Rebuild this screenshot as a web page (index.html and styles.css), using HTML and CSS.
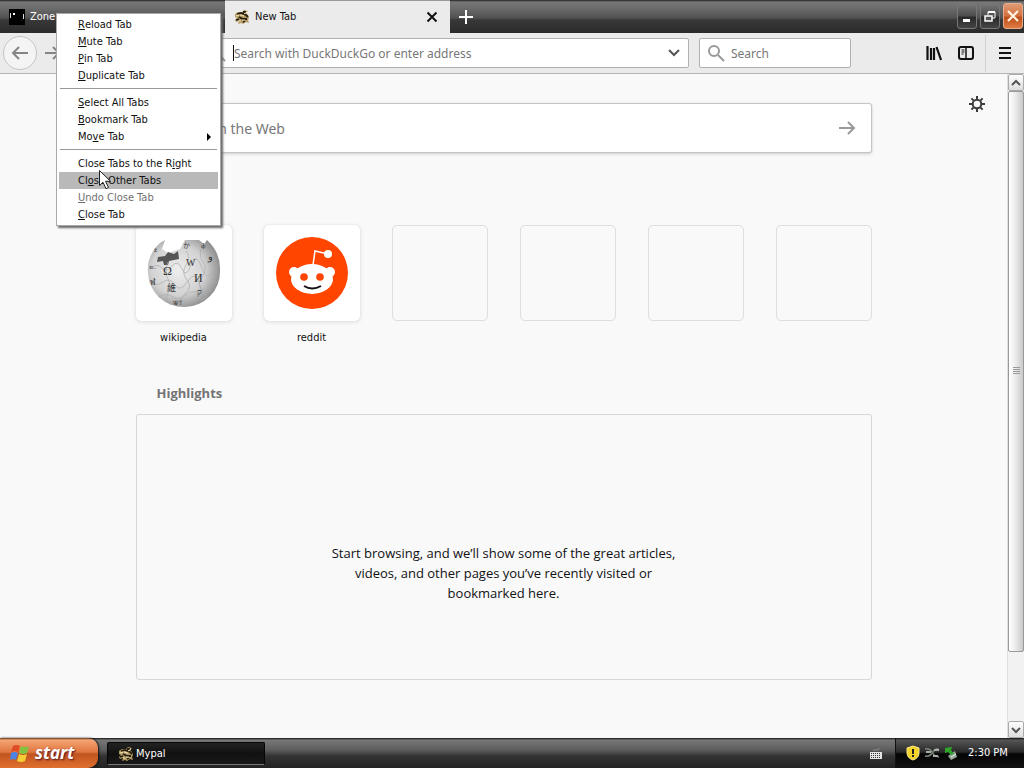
FILE: index.html
```html
<!DOCTYPE html>
<html lang="en">
<head>
<meta charset="utf-8">
<meta name="viewport" content="width=device-width, initial-scale=1">
<title>New Tab</title>
<link rel="stylesheet" href="styles.css">
</head>
<body>
<svg class="defs" aria-hidden="true">
  <symbol id="bee" viewBox="0 0 16 16">
    <path d="M1 5l3-2 4 0 2-2 4 1-2 2 2 2 1 3-1 2 1 3-3-1-3 2-2-1-3 1 1-3-3 1-1-2 2-2-2-1z" fill="#b39a62"/>
    <path d="M3 5l4-1 5 2 2 2M5 8l4 2 4 0M9 3l3 0M2 11l3-1M9 13l2-1" stroke="#241d10" stroke-width="1.8" fill="none"/>
    <path d="M2 7l3-1M6 6l4 1M8 11l3 0M10 5l3-2M5 12l2 0" stroke="#f0e3b4" stroke-width="1"/>
  </symbol>
</svg>

<header class="titlebar">
  <div class="tab tab-back">
    <svg class="icon16" viewBox="0 0 16 16" aria-hidden="true"><path d="M0 0h16v16H0z" fill="#000"/><path d="M1.500 4v5M14.500 5v5" stroke="#ddd"/><path d="M4 4h2v2H4z" fill="#fff"/></svg>
    <span class="tab-title">Zone</span>
  </div>
  <div class="tab tab-active">
    <svg class="icon16" aria-hidden="true"><use href="#bee"/></svg>
    <span class="tab-title">New Tab</span>
    <button class="plain" aria-label="Close tab"><svg width="12" height="12" viewBox="0 0 12 12"><path d="M1.500 1.500l9 9M10.500 1.500l-9 9" stroke="#111" stroke-width="2"/></svg></button>
  </div>
  <button class="plain new-tab" aria-label="Open a new tab"><svg width="16" height="16" viewBox="0 0 16 16"><path d="M8 1v14M1 8h14" stroke="#fff" stroke-width="2"/></svg></button>
  <div class="window-buttons">
    <button class="winbtn" aria-label="Minimize"><svg width="18" height="24" viewBox="0 0 18 24"><path d="M5 15h7v3H5z" fill="#fff"/></svg></button>
    <button class="winbtn" aria-label="Restore"><svg width="18" height="24" viewBox="0 0 18 24"><path d="M7 11V8h7v6h-3" stroke="#fff" fill="none"/><path d="M7 8h7" stroke="#fff" stroke-width="2"/><path d="M4 12h7v5H4z" stroke="#fff" stroke-width="1.5" fill="#555"/></svg></button>
    <button class="winbtn winbtn-close" aria-label="Close"><svg width="18" height="24" viewBox="0 0 18 24"><path d="M4 7l10 10M14 7L4 17" stroke="#fff3e0" stroke-width="2.2"/></svg></button>
  </div>
</header>

<nav class="toolbar">
  <button class="plain back" aria-label="Back"><svg width="18" height="16" viewBox="0 0 18 16"><path d="M17 8H2M8 2L2 8l6 6" stroke="#858585" stroke-width="2" fill="none"/></svg></button>
  <button class="plain forward" aria-label="Forward"><svg width="16" height="16" viewBox="0 0 16 16"><path d="M0 8h14M8 2l6 6-6 6" stroke="#858585" stroke-width="2" fill="none"/></svg></button>
  <div class="urlbar">
    <svg class="search-icon" width="18" height="18" viewBox="0 0 18 18" aria-hidden="true"><circle cx="7" cy="7" r="5" fill="none" stroke="#999" stroke-width="2"/><path d="M11 11l6 6" stroke="#999" stroke-width="2"/></svg>
    <input type="text" aria-label="Address" placeholder="Search with DuckDuckGo or enter address">
    <button class="plain" aria-label="Show history"><svg width="14" height="10" viewBox="0 0 14 10"><path d="M2 2l5 5 5-5" stroke="#555" stroke-width="2" fill="none"/></svg></button>
  </div>
  <div class="searchbar">
    <svg width="18" height="18" viewBox="0 0 18 18" aria-hidden="true"><circle cx="7" cy="7" r="5" fill="none" stroke="#999" stroke-width="2"/><path d="M11 11l6 6" stroke="#999" stroke-width="2"/></svg>
    <input type="text" aria-label="Search" placeholder="Search">
  </div>
  <div class="tools">
    <button class="plain" aria-label="Library"><svg width="16" height="16" viewBox="0 0 16 16"><path d="M1.500 1v14M5 3v12M8 3v12M10.500 2l4.500 13" stroke="#111" stroke-width="2.200" fill="none"/></svg></button>
    <button class="plain" aria-label="Sidebars"><svg width="16" height="16" viewBox="0 0 16 16"><rect x="1" y="2" width="14" height="12" rx="2" fill="none" stroke="#111" stroke-width="2"/><path d="M8 2v12" stroke="#111" stroke-width="1.500"/><path d="M3.500 5h3M3.500 7h3M3.500 9h2" stroke="#111"/></svg></button>
    <button class="plain menu-button" aria-label="Open menu"><svg width="14" height="14" viewBox="0 0 14 14"><path d="M1 2h12M1 7h12M1 12h12" stroke="#111" stroke-width="2"/></svg></button>
  </div>
</nav>

<div class="viewport">
  <main class="page">
    <button class="plain gear" aria-label="Customize your New Tab page"><svg width="16" height="16" viewBox="0 0 16 16"><circle cx="8" cy="8" r="4.300" fill="none" stroke="#3b3b3b" stroke-width="2"/><path d="M8 0v3M8 13v3M0 8h3M13 8h3M2.400 2.400l2 2M11.600 11.600l2 2M13.600 2.400l-2 2M4.400 11.600l-2 2" stroke="#3b3b3b" stroke-width="2"/></svg></button>
    <div class="column">
      <form class="web-search">
        <input type="text" aria-label="Search the Web" placeholder="Search the Web">
        <button class="plain" type="button" aria-label="Search"><svg width="18" height="16" viewBox="0 0 18 16"><path d="M1 8h15M10 2l6 6-6 6" stroke="#999" stroke-width="2" fill="none"/></svg></button>
      </form>
      <ul class="sites">
        <li><a class="site" href="#wikipedia"><span class="tile">
          <svg width="76" height="76" viewBox="0 0 76 76" aria-hidden="true">
            <defs><radialGradient id="globe" cx="42%" cy="45%" r="62%"><stop offset="0" stop-color="#eee"/><stop offset=".6" stop-color="#d2d2d2"/><stop offset="1" stop-color="#858585"/></radialGradient></defs>
            <path d="M5 20Q10 9 19 5l-3 9 6 4 12-4 5-9 14 0 5 4 3-4q14 13 13 31A36 35 0 0 1 2 38Q1 28 5 20z" fill="url(#globe)"/>
            <path d="M12 22l7-1 3-4 6 2 4-3 1 8-10 2-1 4-4 0-1-4-6 1z" fill="#555"/>
            <path d="M4 33q8-5 12 0t10-2 10 3 9-4 11 3 15-2M3 47q7 5 14 0t12 3 13-4 12 4 15-4M12 62q9-5 15 0t13-2 20 0M22 27q-4 10 0 17t0 14 3 12M40 16q5 6 0 14t1 15-2 14 1 13M56 12q-4 8 1 15t-1 15 1 14-1 9" stroke="#aaa" stroke-width=".7" fill="none"/>
            <g class="glyphs"><text x="17" y="40" font-size="12">Ω</text><text x="40" y="31" font-size="10">W</text><text x="48" y="47" font-size="12">И</text><text x="21" y="56" font-size="9">維</text><text x="51" y="60" font-size="9">ק</text><text x="62" y="25" font-size="10">و</text><text x="3" y="34" font-size="8">உ</text><text x="4" y="50" font-size="8">ฬ</text><text x="37" y="13" font-size="7">か</text><text x="55" y="13" font-size="7">ф</text><text x="27" y="70" font-size="6">ᏔᎢ</text><text x="8" y="17" font-size="7">ž</text></g>
          </svg></span><span class="site-label">wikipedia</span></a></li>
        <li><a class="site" href="#reddit"><span class="tile">
          <svg width="76" height="76" viewBox="0 0 76 76" aria-hidden="true">
            <circle cx="38" cy="38" r="36" fill="#ff4500"/>
            <path d="M39 30l2-14 13 3" stroke="#fff" stroke-width="1.500" fill="none"/>
            <circle cx="54" cy="19" r="4" fill="#fff"/><circle cx="20" cy="37" r="5" fill="#fff"/><circle cx="56" cy="37" r="5" fill="#fff"/>
            <ellipse cx="38" cy="44" rx="21" ry="15" fill="#fff"/>
            <circle cx="30" cy="42" r="3.800" fill="#ff4500"/><circle cx="46" cy="42" r="3.800" fill="#ff4500"/>
            <path d="M30 51q8 5 17 0" stroke="#111" stroke-width="2" fill="none"/>
          </svg></span><span class="site-label">reddit</span></a></li>
        <li><span class="tile tile-empty"></span></li>
        <li><span class="tile tile-empty"></span></li>
        <li><span class="tile tile-empty"></span></li>
        <li><span class="tile tile-empty"></span></li>
      </ul>
      <h2 class="heading">Highlights</h2>
      <section class="highlights"><p>Start browsing, and we’ll show some of the great articles, videos, and other pages you’ve recently visited or bookmarked here.</p></section>
    </div>
  </main>
  <div class="scrollbar">
    <button class="scroll-btn" aria-label="Scroll up"><svg width="10" height="8" viewBox="0 0 10 8"><path d="M1 6l4-4 4 4" stroke="#555" stroke-width="2" fill="none"/></svg></button>
    <div class="track"><div class="thumb"><svg width="7" height="8" viewBox="0 0 7 8" aria-hidden="true"><path d="M0 .5h7M0 2.500h7M0 4.500h7M0 6.500h7" stroke="#999"/></svg></div></div>
    <button class="scroll-btn" aria-label="Scroll down"><svg width="10" height="8" viewBox="0 0 10 8"><path d="M1 2l4 4 4-4" stroke="#555" stroke-width="2" fill="none"/></svg></button>
  </div>
</div>

<footer class="taskbar">
  <button class="start">
    <svg width="20" height="18" viewBox="0 0 20 18" aria-hidden="true"><path d="M3 2q3-2 7 0L8 8Q5 6 1 8z" fill="#df4b24"/><path d="M11 2q4 2 8 0l-2 7q-4 2-8 0z" fill="#83c341"/><path d="M1 9q3-2 7 0l-2 7q-3-2-6 0z" fill="#4d84e2"/><path d="M9 10q4 2 8 0l-2 7q-4 2-8 0z" fill="#f7cd36"/></svg>
    <span>start</span>
  </button>
  <button class="task"><svg class="icon16" aria-hidden="true"><use href="#bee"/></svg><span>Mypal</span></button>
  <button class="plain keyboard" aria-label="Keyboard"><svg width="14" height="12" viewBox="0 0 14 12"><path d="M4 4q0-2 3-1t3-2" stroke="#888" fill="none"/><path d="M1 5h12v7H1z" fill="#e4e4e4"/><path d="M2 6.500h10M2 8.500h10M2 10.500h10" stroke="#333" stroke-dasharray="1 1"/></svg></button>
  <div class="tray">
    <svg width="14" height="16" viewBox="0 0 14 16" aria-hidden="true"><path d="M7 1l6 2v5q0 5-6 7-6-2-6-7V3z" fill="#f5d22b" stroke="#f8e98c"/><path d="M7 4v5M7 10v2" stroke="#222" stroke-width="2"/></svg>
    <svg width="16" height="14" viewBox="0 0 16 14" aria-hidden="true"><path d="M1 3q5-1 7 3t7 5M1 10q5 1 8-4t6-2" stroke="#78847a" stroke-width="1.500" fill="none"/><path d="M2 5h5v2H2zM9 9h5v2H9zM10 3h5v2h-5z" fill="#a5ada6"/></svg>
    <svg width="14" height="16" viewBox="0 0 14 16" aria-hidden="true"><path d="M4 11l7-5 2 6-6 3z" fill="#9aa59c"/><path d="M7 12l5-3" stroke="#eee"/><path d="M1 3l7-1-1 3 3 4-3 1-3-3-3 1z" fill="#31a52b"/></svg>
    <time class="clock">2:30 PM</time>
  </div>
</footer>

<div class="menu" role="menu">
  <button role="menuitem"><u>R</u>eload Tab</button>
  <button role="menuitem"><u>M</u>ute Tab</button>
  <button role="menuitem"><u>P</u>in Tab</button>
  <button role="menuitem"><u>D</u>uplicate Tab</button>
  <hr>
  <button role="menuitem"><u>S</u>elect All Tabs</button>
  <button role="menuitem"><u>B</u>ookmark Tab</button>
  <button role="menuitem" class="has-sub"><span>Mo<u>v</u>e Tab</span><svg width="4" height="8" viewBox="0 0 4 8" aria-hidden="true"><path d="M0 0l4 4-4 4z"/></svg></button>
  <hr>
  <button role="menuitem">Close Tabs to the R<u>i</u>ght</button>
  <button role="menuitem" class="hovered">Cl<u>o</u>se Other Tabs</button>
  <button role="menuitem" disabled><u>U</u>ndo Close Tab</button>
  <button role="menuitem"><u>C</u>lose Tab</button>
</div>
<svg class="cursor" width="12" height="20" viewBox="0 0 12 20" aria-hidden="true"><path d="M.5.500v15l3.500-3.300 3 6.500 2.500-1.200-3-6.200h5z" fill="#fff" stroke="#222"/></svg>
</body>
</html>
```
FILE: styles.css
```css
* { box-sizing: border-box; }

body {
  margin: 0;
  min-height: 100vh;
  display: flex;
  flex-direction: column;
  position: relative;
  background: #f9f9fa;
  color: #111;
  font: 11px/16px "DejaVu Sans Condensed", "Noto Sans", sans-serif;
}

button, input { font: inherit; color: inherit; }
button { margin: 0; padding: 0; border: 0; }
svg { flex: none; }
.defs { position: absolute; width: 0; height: 0; }
.plain { display: flex; align-items: center; justify-content: center; background: none; }
.icon16 { width: 16px; height: 16px; }

.titlebar {
  display: flex;
  height: 33px;
  background: linear-gradient(#222 0, #777 2px, #6c6c6c 8px, #505050 55%, #383838 60%, #2b2b2b 100%);
}
.tab { display: flex; align-items: center; width: 225px; padding: 0 12px 0 9px; gap: 5px; color: #fff; }
.tab-title { flex: 1; }
.tab-active { background: #ebebeb; color: #111; border-top: 1px solid #999; }
.new-tab { width: 32px; }
.window-buttons { display: flex; gap: 3px; margin-left: auto; padding: 3px 1px 4px 0; }
.winbtn {
  width: 20px;
  display: flex;
  align-items: center;
  justify-content: center;
  border: 1px solid #777;
  border-radius: 3px;
  background: linear-gradient(#777, #4c4c4c 50%, #292929 55%, #444);
}
.winbtn-close { border-color: #e5ad8d; background: linear-gradient(#df9a75, #d4703f 50%, #bd4e1b 55%, #e07a42); }

.toolbar {
  display: flex;
  align-items: center;
  height: 41px;
  padding-left: 3px;
  background: #ebebeb;
  border-bottom: 1px solid #b5b5b5;
}
.back { width: 34px; height: 34px; border: 1px solid #c4c4c4; border-radius: 50%; background: #f4f4f4; }
.forward { width: 32px; }
.urlbar, .searchbar {
  display: flex;
  align-items: center;
  height: 30px;
  background: #fff;
  border: 1px solid #b1b1b1;
  border-radius: 2px;
}
.urlbar { flex: 1; margin-left: 136px; padding: 0 7px 0 0; }
.urlbar .search-icon { margin: 0 7px 0 2px; }
.searchbar { width: 152px; margin-left: 10px; padding-left: 7px; gap: 6px; }
.toolbar input, .web-search input {
  flex: 1;
  min-width: 0;
  padding: 2px 0 0;
  border: 0;
  outline: 0;
  background: none;
  font-family: "Noto Sans", sans-serif;
  font-size: 12px;
}
.urlbar input { border-left: 1px solid #111; height: 16px; }
::placeholder { color: #777; opacity: 1; }
.tools { display: flex; align-items: center; align-self: stretch; gap: 16px; margin-left: 75px; }
.menu-button { width: 39px; height: 37px; margin-left: -5px; border-left: 1px solid #d0d0d0; }

.viewport { flex: 1; display: flex; }
.page { flex: 1; position: relative; padding: 29px 32px 48px; }
.gear { position: absolute; top: 22px; right: 22px; }
.column { max-width: 736px; margin: 0 auto; }
.web-search {
  display: flex;
  height: 50px;
  padding: 0 15px 0 46px;
  background: #fff;
  border: 1px solid #c4c4c4;
  border-radius: 3px;
  box-shadow: 0 1px 3px #ccc;
}
.web-search input { font-size: 14px; }
.sites { display: flex; justify-content: space-between; margin: 72px 0 0; padding: 0; list-style: none; }
.site { color: inherit; text-decoration: none; }
.tile {
  display: flex;
  align-items: center;
  justify-content: center;
  width: 96px;
  height: 96px;
  background: #fff;
  border-radius: 5px;
  box-shadow: 0 0 1px #ccc, 0 1px 4px #ddd;
}
.tile-empty { background: none; border: 1px solid #dedede; box-shadow: none; }
.site-label { display: block; margin-top: 9px; text-align: center; }
.glyphs { font-family: "Liberation Serif", "Noto Sans CJK SC", serif; fill: #333; }
.heading { margin: 38px 0 12px 21px; font: bold 13px/18px "Open Sans", sans-serif; color: #737373; }
.highlights {
  display: flex;
  justify-content: center;
  height: 266px;
  padding: 128px 0 0;
  border: 1px solid #d7d7db;
  border-radius: 3px;
}
.highlights p { max-width: 348px; margin: 0; text-align: center; font: 13px/20px "Open Sans", sans-serif; }

.scrollbar { display: flex; flex-direction: column; width: 17px; border-left: 1px solid #ddd; background: #f2f2f2; }
.scroll-btn {
  display: flex;
  align-items: center;
  justify-content: center;
  height: 17px;
  border: 1px solid #aaa;
  border-radius: 2px;
  background: linear-gradient(#fff, #ddd);
}
.track { flex: 1; }
.thumb {
  display: flex;
  align-items: center;
  justify-content: center;
  height: 89%;
  border: 1px solid #999;
  border-radius: 2px;
  background: linear-gradient(90deg, #fff, #e9e9e9 50%, #c9c9c9);
}

.taskbar {
  display: flex;
  height: 30px;
  color: #fff;
  background: linear-gradient(#111 0, #777 2px, #5d5d5d 12px, #333 18px, #222 100%);
}
.start {
  display: flex;
  align-items: center;
  width: 98px;
  padding-left: 10px;
  gap: 5px;
  border-radius: 0 10px 10px 0;
  background: linear-gradient(#67361c 0, #f4a574 2px, #e0763f 14px, #c0541f 16px, #e0702f 100%);
  box-shadow: 1px 0 2px #111;
  font: italic bold 17px/24px "Open Sans", sans-serif;
  text-shadow: 1px 1px 2px #512;
}
.task {
  display: flex;
  align-items: center;
  width: 158px;
  margin: 4px 0 3px 9px;
  padding-left: 10px;
  gap: 2px;
  border: 1px solid #050505;
  border-bottom-color: #777;
  border-radius: 2px;
  background: linear-gradient(#222, #111 50%, #181818);
}
.keyboard { margin: 0 12px 0 auto; }
.tray {
  display: flex;
  align-items: center;
  width: 129px;
  padding-left: 10px;
  gap: 4px;
  border-left: 1px solid #111;
  background: linear-gradient(#111 0, #555 2px, #292929 14px, #050505 16px, #111 100%);
}
.clock { margin-left: 6px; }

.menu {
  position: absolute;
  top: 13px;
  left: 56px;
  width: 165px;
  padding: 2px;
  background: #fff;
  border: 1px solid #aaa;
  box-shadow: 2px 2px 2px #666;
}
.menu button {
  display: flex;
  align-items: center;
  width: 100%;
  height: 17px;
  padding: 0 7px 0 19px;
  background: none;
  white-space: pre;
}
.menu .hovered { background: #b9b9b9; }
.menu button:disabled { color: #707070; }
.menu .has-sub { justify-content: space-between; }
.menu hr { margin: 4px 1px 5px; border: 0; border-top: 1px solid #999; }
.cursor { position: absolute; top: 170px; left: 99px; }
```
